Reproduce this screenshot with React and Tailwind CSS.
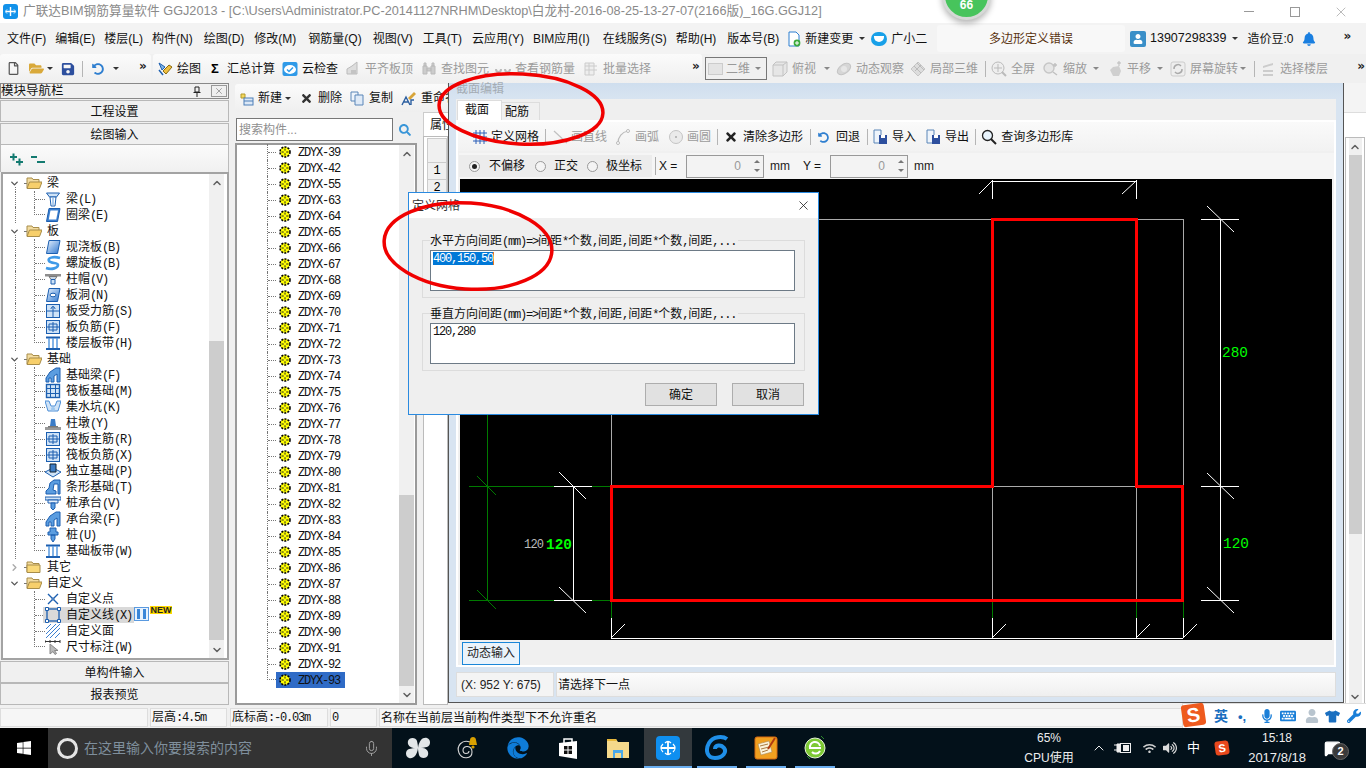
import React from 'react';
import { FaEdge, FaMicrophone, FaKeyboard, FaTshirt, FaWrench, FaUser, FaBell, FaWifi, FaVolumeUp, FaSearch, FaTimes, FaUndoAlt, FaSave, FaFolderOpen, FaRegFile, FaWindows } from 'react-icons/fa';
import { ChevronUp, ChevronDown, ChevronRight, Mic, MessageSquare, X } from 'lucide-react';

function Sim({ t, className = '' }) {
  const parts = t.split(/([\x00-\x7f]+)/).filter(Boolean);
  return (
    <span className={`whitespace-nowrap ${className}`}>
      {parts.map((p, i) =>
        /^[\x00-\x7f]/.test(p) ? (
          <span key={i} className="font-['Liberation_Mono',monospace] tracking-[-1.2px] whitespace-pre">{p}</span>
        ) : (
          <span key={i}>{p}</span>
        )
      )}
    </span>
  );
}

const B = '#1c5fb0';
const L = '#cfe3f7';
const treeIcons = {
  liang: <><path d="M1.5 2h13l-3 4h-7z" fill={L} stroke={B} /><path d="M5 6h6l-1 9H6z" fill="#fff" stroke={B} /><path d="M8 7v7" stroke="#5a9ae0" /></>,
  quan: <><path d="M4 1.5h11l-2.5 13H1.5z" fill="#3b7fd0" stroke={B} /><path d="M5.5 3.5h7.5l-1.8 9H3.8z" fill="#fff" /></>,
  ban: <><path d="M4 1.5h11l-2.5 13H1.5z" fill="url(#gb)" stroke={B} /></>,
  luo: <><path d="M15 3C8 1 2 3 4 6s9 1 9 4-6 5-12 3" fill="none" stroke="#3f9ae8" strokeWidth="2.6" /></>,
  mao: <><path d="M0 3h16v2.5H0z" fill="#8d8d8d" /><path d="M4 5.5h8l-2 3H6z" fill="#c8d6e4" stroke="#777" /><path d="M6 8.5h4V13H6z" fill={L} stroke={B} /></>,
  dong: <><path d="M4 1.5h11l-2.5 13H1.5z" fill="url(#gb)" stroke={B} /><ellipse cx="8" cy="8" rx="3" ry="1.8" fill="#fff" stroke={B} /></>,
  shou: <><rect x="1.5" y="1.5" width="13" height="13" fill={L} stroke={B} /><path d="M1.5 8h13M8 3v11M6 6c0-3 4-3 4 0" fill="none" stroke={B} /></>,
  fu: <><rect x="1.5" y="1.5" width="13" height="13" fill={L} stroke={B} /><path d="M1.5 8h13M8 3v10M4 5h8v6H4z" fill="none" stroke={B} /></>,
  dai: <><path d="M1 2.5h14M1 14h14" stroke={B} strokeWidth="2" /><path d="M4 3v10M8 3v10M12 3v10" stroke="#5a9ae0" strokeWidth="1.5" /></>,
  jl: <><path d="M1 15V11l4-6 6-4h4v14h-3V7l-3 2v6H6V11H4v4z" fill="#5b9de0" stroke={B} /></>,
  fa: <><rect x="1.5" y="1.5" width="13" height="13" fill={L} stroke={B} strokeWidth="1.4" /><path d="M1.5 5.5h13M1.5 10.5h13M5.5 1.5v13M10.5 1.5v13" stroke={B} /></>,
  keng: <><path d="M0 2h4l2 5h4l2-5h4l-3 10H3z" fill={L} stroke="#4c8ed6" /><circle cx="8" cy="10" r="2" fill="#9cc6ee" /></>,
  dun: <><path d="M0 12h16v3H0z" fill="#9a9a9a" /><path d="M3 11h10v1.5H3z" fill="#777" /><path d="M6 4h4l1 7H5z" fill="#3a7cc8" /></>,
  du: <><path d="M0 9l8-4 8 4-8 5z" fill={L} stroke={B} /><path d="M5 1h6v8H5z" fill="#3d7cc4" stroke="#123" /></>,
  tiao: <><path d="M1 15v-3l3-3 1-5 4-3h6v14h-2V5H9l-1 6 3 1v3z" fill="#5b9de0" stroke={B} /></>,
  tai: <><path d="M0 2h16v3H0z" fill={L} stroke={B} /><path d="M3 5h10v3H3z" fill="#e8f1fb" stroke={B} /><path d="M6 8h4v5L8 15l-2-2z" fill="#5b9de0" stroke={B} /></>,
  zhuang: <><path d="M5 1h6v4h2v3H3V5h2zM6 8h4v4l-2 3-2-3z" fill="#5b9de0" stroke={B} /></>,
  dian: <><path d="M3 3l10 10M13 3L3 13" stroke={B} strokeWidth="1.4" /><circle cx="8" cy="8" r="1" fill="#fff" stroke={B} /></>,
  xian: <><rect x="2" y="2" width="12" height="12" fill="none" stroke={B} strokeWidth="1.3" /><path d="M.5.5h3v3h-3zM12.5.5h3v3h-3zM.5 12.5h3v3h-3zM12.5 12.5h3v3h-3z" fill="#fff" stroke={B} /></>,
  mian: <><path d="M1 6l5-5M1 11L11 1M1 15L15 1M5 15L15 5M10 15l5-5" stroke="#3b7fd0" /></>,
  chi: <><path d="M0 1v3M0 2.5h15M15 1v3M5 1v3M10 1v3" stroke="#333" /><path d="M5 5v10l3-2.5 2 3 1.5-1-2-3h3.5z" fill="#b9b9b9" stroke="#888" /></>,
};

function TIcon({ n }) {
  return (
    <svg width="16" height="16" viewBox="0 0 16 16" className="shrink-0">
      <defs>
        <linearGradient id="gb" x1="0" y1="0" x2="1" y2="1"><stop offset="0" stopColor="#e8f2fd" /><stop offset="1" stopColor="#2f78d0" /></linearGradient>
      </defs>
      {treeIcons[n]}
    </svg>
  );
}

function Folder({ open }) {
  return (
    <svg width="16" height="14" viewBox="0 0 16 14" className="shrink-0">
      <path d="M1 2h5l1 1.5h6V12H1z" fill="#f3dca0" stroke="#a88d4a" />
      {open ? <path d="M3.5 6H16l-2.5 6.5H1z" fill="#f7cf6b" stroke="#a88d4a" /> : <path d="M1 5h13v7.5H1z" fill="#f9d879" stroke="#a88d4a" />}
    </svg>
  );
}

function Parent({ t, open = true, guide = false }) {
  return (
    <div className="flex h-4 items-center relative">
      {guide && <div className="absolute left-[15px] top-[12px] h-[5px] border-l border-dotted border-[#777]" />}
      <div className="w-[24px] pl-[9px] shrink-0">
        {open ? <ChevronDown size={11} strokeWidth={3} color="#555" /> : <ChevronRight size={11} strokeWidth={3} color="#aaa" />}
      </div>
      <div className="w-[2px] border-b border-dotted border-[#777]" />
      <Folder open={open} />
      <Sim t={t} className="ml-[5px] text-[12px] text-[#111]" />
    </div>
  );
}

function Child({ n, t, guide = false, last = false, extra = null, sel = false }) {
  return (
    <div className="flex h-4">
      <div className={`ml-[15px] w-[19px] h-full ${guide ? 'border-l border-dotted border-[#777]' : ''}`} />
      {last ? (
        <div className="w-[11px] h-[8px] border-l border-b border-dotted border-[#777]" />
      ) : (
        <div className="w-[11px] h-full border-l border-dotted border-[#777] flex items-center"><div className="w-full border-b border-dotted border-[#777]" /></div>
      )}
      <div className={`flex items-center h-4 ${sel ? 'bg-[#d9d9d9] -ml-[2px] pl-[2px] pr-[2px]' : ''}`}>
        <TIcon n={n} />
        <Sim t={t} className="ml-[5px] text-[12px] text-[#111]" />
      </div>
      {extra}
    </div>
  );
}

function VScroll({ w = 'w-[15px]', space, thumb }) {
  return (
    <div className={`${w} h-full flex flex-col bg-[#f0f0f0] shrink-0`}>
      <div className="h-[17px] flex items-center justify-center shrink-0"><ChevronUp size={12} strokeWidth={3} color="#606060" /></div>
      <div className={`${space} shrink-0`} />
      <div className={`${thumb} bg-[#cdcdcd] shrink-0`} />
      <div className="flex-1" />
      <div className="h-[17px] flex items-center justify-center shrink-0"><ChevronDown size={12} strokeWidth={3} color="#606060" /></div>
    </div>
  );
}

function Caret({ ml = '', c = '#333' }) {
  return <div className={`${ml} shrink-0 w-0 h-0 border-x-[3px] border-x-transparent border-t-[3px]`} style={{ borderTopColor: c }} />;
}

function More() {
  return <span className="text-[12px] font-bold leading-none text-[#222] font-['DejaVu_Sans'] tracking-[-1px]">»</span>;
}

function G({ children, size = 16 }) {
  return <svg width={size} height={size} viewBox="0 0 16 16" className="shrink-0">{children}</svg>;
}

const icoGray = {
  qi: <G><path d="M2 13V8l5-3 5-4v12z" fill="#ddd" stroke="#bbb" /><path d="M6 13V9h5v4z" fill="#c4c4c4" /></G>,
  find: <G><path d="M2 5h4v8H2zM10 5h4v8h-4zM6 7h4v3H6zM3 2h2v3H3zM11 2h2v3h-2z" fill="#ccc" stroke="#bbb" /></G>,
  rebar: <G><path d="M1 8c0 4 5 4 5 0M10 8c0 4 5 4 5 0M8 10h0" fill="none" stroke="#bbb" strokeWidth="2" /></G>,
  batch: <G><path d="M2 2h9v12H2z" fill="#eee" stroke="#ccc" /><path d="M2 5h12M2 9h12M6 2v12" stroke="#ccc" /></G>,
  top: <G><path d="M4 1h11v10l-4 4H1V4z" fill="#e6e6e6" stroke="#c2c2c2" /><path d="M1 4h10v11M11 4l4-3" fill="none" stroke="#c2c2c2" /></G>,
  orbit: <G><ellipse cx="8" cy="8" rx="7.5" ry="4.5" transform="rotate(-35 8 8)" fill="#d6d6d6" stroke="#c4c4c4" /><circle cx="8" cy="8" r="3" fill="#e6e6e6" /></G>,
  d3: <G><path d="M1 8l7-7 7 7-7 7z" fill="#ddd" stroke="#c6c6c6" /><path d="M4 5l7 7M7 2l7 7M5 10l6-6" stroke="#bbb" /></G>,
  full: <G><circle cx="7" cy="7" r="6" fill="#eee" stroke="#bbb" /><path d="M7 3v8M3 7h8" stroke="#bbb" /><path d="M11 11l4 4" stroke="#bbb" strokeWidth="2" /></G>,
  zoom: <G><circle cx="6" cy="7" r="5" fill="#e6e6e6" stroke="#c6c6c6" strokeWidth="1.4" /><path d="M10 11l4 3M12 2v4M10 4h4" stroke="#c0c0c0" strokeWidth="1.4" /></G>,
  pan: <G><path d="M3 9l3-3 6-1 2 5-2 5H6z" fill="#cfcfcf" /><path d="M12 0v5M10 2h4" stroke="#bbb" /></G>,
  rot: <G><rect x="1" y="1" width="14" height="14" rx="2" fill="#eee" stroke="#ccc" /><path d="M4 8a4 4 0 0 1 7-3M12 8a4 4 0 0 1-7 3" fill="none" stroke="#aaa" strokeWidth="1.5" /></G>,
  floor: <G><path d="M3 5l10-3v2L3 7zM3 9h10v2H3zM3 13h10v2H3z" fill="#ccc" /></G>,
  line: <G><path d="M1 2l13 12" stroke="#c0c0c0" strokeWidth="1.2" /></G>,
  arc: <G><path d="M3 14C3 8 7 3 13 2" fill="none" stroke="#bbb" strokeWidth="1.2" /><circle cx="3" cy="14" r="1.5" fill="#fff" stroke="#bbb" /><circle cx="13" cy="2" r="1.5" fill="#fff" stroke="#bbb" /></G>,
  circle: <G><circle cx="8" cy="8" r="6.5" fill="#eaeaea" stroke="#c4c4c4" /><circle cx="8" cy="8" r="1" fill="#aaa" /></G>,
};

function Tool({ ic, t, ml = '', gray = false, gap = 'ml-[4px]' }) {
  return (
    <div className={`flex items-center ${ml} shrink-0`}>
      <div className="w-4 h-4 flex items-center justify-center shrink-0">{ic}</div>
      <span className={`${gap} text-[12px] whitespace-nowrap ${gray ? 'text-[#9b9b9b]' : 'text-[#111]'}`}>{t}</span>
    </div>
  );
}

const Sep = ({ ml = '' }) => <div className={`${ml} w-px h-[16px] bg-[#b5b5b5] shrink-0`} />;

const icoDraw = <G><path d="M2 2l6 4-3 3z" fill="#7fb3e6" stroke="#1c5fb0" /><path d="M6 10l6-6 3 2-6 7z" fill="#f0c040" stroke="#8a6a10" /><path d="M2 9l4 5" stroke="#1c5fb0" strokeWidth="1.5" /></G>;
const icoCloud = <G><rect x="0.5" y="1" width="15" height="14" rx="2" fill="#2f9ae8" /><ellipse cx="8" cy="8.5" rx="6" ry="4.4" fill="#fff" /><path d="M5 8.5l2 2 4-4" fill="none" stroke="#2f9ae8" strokeWidth="1.5" /></G>;

function TitleBar() {
  return (
    <div className="h-[23px] bg-white flex items-center shrink-0">
      <div className="ml-[3px] w-[15px] h-[15px] rounded-[3px] bg-[#1292ea] flex items-center justify-center shrink-0">
        <svg width="11" height="11" viewBox="0 0 11 11"><path d="M5.5 1v9M1 5.5h9" stroke="#fff" strokeWidth="1.4" /><path d="M2 3.5c-2 2-2 2 0 4M9 3.5c2 2 2 2 0 4" fill="none" stroke="#fff" /></svg>
      </div>
      <span className="ml-[5px] text-[12.7px] text-[#8a8a8a] whitespace-nowrap">广联达BIM钢筋算量软件 GGJ2013 - [C:\Users\Administrator.PC-20141127NRHM\Desktop\白龙村-2016-08-25-13-27-07(2166版)_16G.GGJ12]</span>
      <div className="flex-1" />
      <div className="w-[10px] h-px bg-[#999] mr-[36px]" />
      <div className="w-[10px] h-[10px] border border-[#999] mr-[33px]" />
      <X size={16} color="#999" strokeWidth={1} className="mr-[17px]" />
    </div>
  );
}

function MenuBar() {
  const items = [
    ['文件(F)', 'ml-[7px]'], ['编辑(E)', 'ml-[9px]'], ['楼层(L)', 'ml-[9px]'], ['构件(N)', 'ml-[9px]'], ['绘图(D)', 'ml-[11px]'], ['修改(M)', 'ml-[10px]'], ['钢筋量(Q)', 'ml-[12px]'], ['视图(V)', 'ml-[11px]'], ['工具(T)', 'ml-[10px]'], ['云应用(Y)', 'ml-[10px]'], ['BIM应用(I)', 'ml-[9px]'], ['在线服务(S)', 'ml-[13px]'], ['帮助(H)', 'ml-[9px]'], ['版本号(B)', 'ml-[11px]'],
  ];
  return (
    <div className="h-[31px] bg-[#f3f3f3] flex items-center shrink-0">
      <div className="w-[930px] flex items-center shrink-0">
        {items.map(([t, m]) => <span key={t} className={`${m} text-[12px] text-[#111] whitespace-nowrap`}>{t}</span>)}
        <div className="ml-[7px] shrink-0"><G><path d="M3 1h7l3 3v11H3z" fill="#fff" stroke="#2c7fd0" /><circle cx="11" cy="12" r="3.4" fill="#3cab3c" /><path d="M9 12h4M11 10v4" stroke="#fff" /></G></div>
        <span className="ml-[3px] text-[12px] text-[#111] whitespace-nowrap">新建变更</span>
        <Caret ml="ml-[6px]" />
        <div className="ml-[6px] w-[16px] h-[14px] rounded-full bg-[#18a0e8] shrink-0 flex items-center justify-center"><div className="w-[10px] h-[6px] rounded-b-full bg-white" /></div>
        <span className="ml-[4px] text-[12px] text-[#111] whitespace-nowrap">广小二</span>
      </div>
      <div className="ml-[7px] w-[188px] h-[27px] bg-[#f8f8f8] rounded-[3px] flex items-center justify-center text-[12px] text-[#5a3410] shrink-0">多边形定义错误</div>
      <div className="ml-[5px] w-[16px] h-[16px] rounded-[2px] bg-[#3a8fc8] flex items-center justify-center shrink-0"><FaUser size={10} color="#fff" /></div>
      <span className="ml-[4px] text-[12.5px] text-[#111] whitespace-nowrap">13907298339</span>
      <Caret ml="ml-[6px]" />
      <span className="ml-[9px] text-[12px] text-[#111] whitespace-nowrap">造价豆:0</span>
      <FaBell size={14} color="#1a7fe0" className="ml-[8px] shrink-0" />
      <div className="ml-[28px] -mt-[8px]"><More /></div>
    </div>
  );
}

function ToolBar() {
  return (
    <div className="h-[29px] bg-[#f0f0f0] flex items-center shrink-0">
      <div className="w-[151px] h-full flex items-center bg-gradient-to-b from-[#fbfbfb] to-[#efefef] rounded-[3px] shrink-0">
        <FaRegFile size={13} color="#555" className="ml-[7px]" />
        <FaFolderOpen size={15} color="#d9a93a" className="ml-[9px]" />
        <Caret ml="ml-[3px]" />
        <FaSave size={14} color="#2d4f9e" className="ml-[8px]" />
        <Sep ml="ml-[7px]" />
        <FaUndoAlt size={12} color="#2f7fd0" className="ml-[9px]" />
        <Caret ml="ml-[9px]" />
        <div className="ml-[20px] -mt-[8px]"><More /></div>
      </div>
      <div className="ml-[2px] w-[549px] h-full flex items-center bg-gradient-to-b from-[#fbfbfb] to-[#efefef] rounded-[3px] shrink-0 pl-[4px]">
        <Tool ic={icoDraw} t="绘图" />
        <Tool ic={<span className="text-[13px] font-bold text-black">Σ</span>} t="汇总计算" ml="ml-[6px]" />
        <Tool ic={icoCloud} t="云检查" ml="ml-[7px]" />
        <Tool ic={icoGray.qi} t="平齐板顶" ml="ml-[7px]" gray />
        <Tool ic={icoGray.find} t="查找图元" ml="ml-[8px]" gray />
        <Tool ic={icoGray.rebar} t="查看钢筋量" ml="ml-[6px]" gray />
        <Tool ic={icoGray.batch} t="批量选择" ml="ml-[8px]" gray />
        <div className="ml-[41px] -mt-[8px]"><More /></div>
      </div>
      <div className="ml-[3px] w-[62px] h-[23px] border border-[#777] flex items-center shrink-0">
        <div className="ml-[2px] w-[15px] h-[12px] bg-[#e4e4e4] border border-[#ccc]" />
        <span className="ml-[3px] text-[12px] text-[#999]">二维</span>
        <Caret ml="ml-[5px]" c="#888" />
      </div>
      <Tool ic={icoGray.top} t="俯视" ml="ml-[5px]" gray />
      <Caret ml="ml-[8px]" c="#888" />
      <Tool ic={icoGray.orbit} t="动态观察" ml="ml-[6px]" gray />
      <Tool ic={icoGray.d3} t="局部三维" ml="ml-[6px]" gray />
      <Sep ml="ml-[7px]" />
      <Tool ic={icoGray.full} t="全屏" ml="ml-[5px]" gray />
      <Tool ic={icoGray.zoom} t="缩放" ml="ml-[8px]" gray />
      <Caret ml="ml-[6px]" c="#888" />
      <Tool ic={icoGray.pan} t="平移" ml="ml-[8px]" gray />
      <Caret ml="ml-[6px]" c="#888" />
      <Tool ic={icoGray.rot} t="屏幕旋转" ml="ml-[7px]" gray />
      <Caret ml="ml-[2px]" c="#888" />
      <Sep ml="ml-[8px]" />
      <Tool ic={icoGray.floor} t="选择楼层" ml="ml-[5px]" gray />
      <div className="ml-[29px] -mt-[8px]"><More /></div>
    </div>
  );
}

function NavBtn({ t }) {
  return <div className="h-[22px] pt-[1px] border border-[#b8b8b8] bg-[#f0f0f0] flex items-center justify-center text-[12px] text-[#111] shrink-0">{t}</div>;
}

function LeftPanel() {
  return (
    <div className="w-[229px] mr-[6px] flex flex-col shrink-0">
      <div className="h-[16px] border border-[#888] flex items-center shrink-0">
        <span className="text-[12.5px] text-[#111] leading-none">模块导航栏</span>
        <div className="flex-1" />
        <svg width="10" height="11" viewBox="0 0 10 11" className="mr-[9px]"><path d="M3 1h4v5H3zM1.5 6.5h7M5 7v4" fill="none" stroke="#222" /></svg>
        <div className="w-[16px] h-[12px] border border-[#999] flex items-center justify-center mr-px"><X size={10} color="#555" strokeWidth={1.2} /></div>
      </div>
      <div className="mt-px"><NavBtn t="工程设置" /></div>
      <div className="mt-px"><NavBtn t="绘图输入" /></div>
      <div className="h-[27px] bg-gradient-to-b from-[#fbfbfb] to-[#f0f0f0] flex items-center border-x border-[#bbb] shrink-0">
        <svg width="40" height="16" viewBox="0 0 40 16" className="ml-[6px]"><path d="M3 6h7M6.5 2.5v7" stroke="#137a70" strokeWidth="2" /><path d="M9 11h7M12.5 7.5v7" stroke="#137a70" strokeWidth="2" /><path d="M24 6h6" stroke="#137a70" strokeWidth="2" /><path d="M30 11h8" stroke="#137a70" strokeWidth="2" /></svg>
      </div>
      <div className="h-[488px] bg-white border-2 border-[#a3a3a3] flex shrink-0 ml-[1px] w-[228px]">
        <div className="flex-1 pt-[1px] overflow-hidden -ml-[3px]">
          <Parent t="梁" guide />
          <Child n="liang" t="梁(L)" guide />
          <Child n="quan" t="圈梁(E)" guide last />
          <Parent t="板" guide />
          <Child n="ban" t="现浇板(B)" guide />
          <Child n="luo" t="螺旋板(B)" guide />
          <Child n="mao" t="柱帽(V)" guide />
          <Child n="dong" t="板洞(N)" guide />
          <Child n="shou" t="板受力筋(S)" guide />
          <Child n="fu" t="板负筋(F)" guide />
          <Child n="dai" t="楼层板带(H)" guide last />
          <Parent t="基础" guide />
          <Child n="jl" t="基础梁(F)" guide />
          <Child n="fa" t="筏板基础(M)" guide />
          <Child n="keng" t="集水坑(K)" guide />
          <Child n="dun" t="柱墩(Y)" guide />
          <Child n="fu" t="筏板主筋(R)" guide />
          <Child n="fu" t="筏板负筋(X)" guide />
          <Child n="du" t="独立基础(P)" guide />
          <Child n="tiao" t="条形基础(T)" guide />
          <Child n="tai" t="桩承台(V)" guide />
          <Child n="jl" t="承台梁(F)" guide />
          <Child n="zhuang" t="桩(U)" guide />
          <Child n="dai" t="基础板带(W)" guide last />
          <Parent t="其它" open={false} />
          <Parent t="自定义" />
          <Child n="dian" t="自定义点" />
          <Child n="xian" t="自定义线(X)" sel extra={
            <div className="flex items-start">
              <div className="w-[15px] h-[14px] border border-[#5a9ae0] bg-[#e8f2fd] flex justify-around px-px py-px shrink-0">
                <div className="w-[3px] bg-[#3a86d8]" /><div className="w-[3px] bg-[#3a86d8]" />
              </div>
              <span className="ml-[1px] -mt-[1px] h-[8px] w-[22px] bg-[#ffd800] text-[9px] leading-[8px] font-bold text-[#222] font-['Liberation_Sans'] text-center">NEW</span>
            </div>
          } />
          <Child n="mian" t="自定义面" />
          <Child n="chi" t="尺寸标注(W)" last />
        </div>
        <VScroll space="h-[150px]" thumb="h-[299px]" />
        <div className="w-[3px] shrink-0" />
      </div>
      <div className="mt-px"><NavBtn t="单构件输入" /></div>
      <NavBtn t="报表预览" />
    </div>
  );
}

const ids = [39, 42, 55, 63, 64, 65, 66, 67, 68, 69, 70, 71, 72, 73, 74, 75, 76, 77, 78, 79, 80, 81, 82, 83, 84, 85, 86, 87, 88, 89, 90, 91, 92, 93];

function Gear() {
  return (
    <svg width="14" height="14" viewBox="0 0 14 14" className="shrink-0">
      <circle cx="7" cy="7" r="5" fill="#ffff00" stroke="#000" strokeWidth="1.6" strokeDasharray="2 1.2" />
      <path d="M7 3.5v7M3.5 7h7" stroke="#222" strokeWidth="1" />
      <circle cx="7" cy="7" r="1.4" fill="#ffff00" />
    </svg>
  );
}

function MidPanel() {
  return (
    <div className="w-[182px] mr-[3px] flex flex-col shrink-0 relative">
      <div className="w-[213px] h-[28px] flex items-center bg-gradient-to-b from-[#fbfbfb] to-[#efefef] whitespace-nowrap overflow-hidden shrink-0 mt-[1px] rounded-[3px]">
        <Tool ic={<G><path d="M3 4h4v4H3z" fill="#f2d65c" stroke="#b39a2a" /><rect x="6" y="8" width="9" height="7" fill="#dce8f6" stroke="#4d7fb8" /><path d="M6 11h9" stroke="#4d7fb8" /></G>} t="新建" ml="ml-[3px]" />
        <Caret ml="ml-[3px]" />
        <FaTimes size={13} color="#333" className="ml-[9px] shrink-0" />
        <span className="ml-[5px] text-[12px] text-[#111]">删除</span>
        <Tool ic={<G><path d="M2 2h7v9H2z" fill="#eef4fb" stroke="#5a86b8" /><path d="M6 5h8v10H6z" fill="#dfeaf7" stroke="#5a86b8" /></G>} t="复制" ml="ml-[7px]" />
        <Tool ic={<G><path d="M7 8l6-6 2 2-6 6z" fill="#d8a53a" /><path d="M1 15l4-8 4 8M3 12h4M10 15v-5h3" fill="none" stroke="#2c5fa0" strokeWidth="1.4" /></G>} t="重命名" ml="ml-[8px]" />
      </div>
      <div className="h-[31px] pt-[6px] flex items-start shrink-0">
        <div className="ml-[1px] w-[157px] h-[23px] bg-white border border-[#777] flex items-center px-[2px] text-[12px] text-[#8f8f8f] shrink-0">搜索构件...</div>
        <div className="w-[24px] h-[23px] flex items-center justify-center"><FaSearch size={12} color="#3a96d8" /></div>
      </div>
      <div className="flex-1 bg-white border-2 border-[#9a9a9a] flex mb-[3px] min-h-0">
        <div className="flex-1 -mt-[1px] overflow-hidden">
          {ids.map((id, i) => {
            const last = i === ids.length - 1;
            return (
              <div key={id} className="flex h-4">
                <div className="w-[30px] shrink-0" />
                {last ? (
                  <div className="w-[9px] h-[8px] border-l border-b border-dotted border-[#777] shrink-0" />
                ) : (
                  <div className="w-[9px] h-full border-l border-dotted border-[#777] flex items-center shrink-0"><div className="w-full border-b border-dotted border-[#777]" /></div>
                )}
                <div className={`flex items-center h-4 w-[69px] pl-[2px] ${last ? 'bg-[#2f6bc6]' : ''}`}>
                  <Gear />
                  <Sim t={`ZDYX-${id}`} className="ml-[6px] text-[12px] text-[#111]" />
                </div>
              </div>
            );
          })}
        </div>
        <VScroll space="h-[333px]" thumb="h-[191px]" />
        <div className="w-[1px] shrink-0" />
      </div>
    </div>
  );
}

function Canvas() {
  const W = '#ffffff', Gn = '#007a00', Gy = '#aaaaaa';
  const ln = (a, b, c, d, col, k) => <line key={k} x1={a} y1={b} x2={c} y2={d} stroke={col} strokeWidth="1" shapeRendering="crispEdges" />;
  const diag = (a, b, c, d, col, k) => <line key={k} x1={a} y1={b} x2={c} y2={d} stroke={col} strokeWidth="1" />;
  return (
    <div className="w-[872px] h-[461px] bg-black mx-auto shrink-0">
      <svg width="872" height="461" viewBox="460 179 872 461" className="block">
        {[[611, 219, 611, 486], [611, 219, 1183, 219], [1183, 219, 1183, 486], [992, 486, 1136, 486], [992, 486, 992, 600], [1136, 486, 1136, 600], [487, 219, 611, 219]].map((p, i) => ln(p[0] + .5, p[1] + .5, p[2] + .5, p[3] + .5, Gy, 'g' + i))}
        {ln(487.5, 219, 487.5, 600, Gn, 'a1')}
        {ln(469, 486.5, 554, 486.5, Gn, 'a2')}{ln(592, 486.5, 611, 486.5, Gn, 'a3')}
        {ln(469, 600.5, 554, 600.5, Gn, 'a4')}{ln(592, 600.5, 611, 600.5, Gn, 'a5')}
        {diag(477, 476, 496, 495, Gn, 'a6')}{diag(477, 590, 496, 609, Gn, 'a7')}
        {ln(554, 486.5, 592, 486.5, W, 'b1')}{ln(554, 600.5, 592, 600.5, W, 'b2')}{ln(573.5, 486, 573.5, 600, W, 'b3')}
        {diag(559, 472, 586, 499, W, 'b4')}{diag(559, 587, 586, 613, W, 'b5')}
        {[611, 992, 1136, 1183].map((x) => (
          <g key={x}>
            {ln(x + .5, 602, x + .5, 618, Gn, 'c' + x)}
            {ln(x + .5, 618, x + .5, 638, W, 'd' + x)}
            {diag(x, 638, x + 14, 624, W, 'e' + x)}
          </g>
        ))}
        {ln(611, 638.5, 1183, 638.5, W, 'f')}
        {ln(992, 181.5, 1136, 181.5, W, 'h1')}{ln(992.5, 180, 992.5, 199, W, 'h2')}{ln(1136.5, 180, 1136.5, 199, W, 'h3')}
        {diag(979, 194, 992, 181, W, 'h4')}{diag(1122, 194, 1136, 181, W, 'h5')}
        {ln(1220.5, 219, 1220.5, 600, W, 'r0')}
        {[219, 486, 600].map((y) => (
          <g key={y}>
            {ln(1201, y + .5, 1239, y + .5, W, 'r' + y)}
            {diag(1207, y - 13, 1234, y + 13, W, 's' + y)}
          </g>
        ))}
        <path d="M611.5 486.5H992.5V219.5H1136V486.5H1182.5V600.5H611.5Z" fill="none" stroke="#ff0000" strokeWidth="3" shapeRendering="crispEdges" />
        <text x="524" y="548" fontSize="12" fill="#bbb" fontFamily="Liberation Mono" letterSpacing="-0.8">120</text>
        <text x="546" y="549" fontSize="14.4" fontWeight="bold" fill="#00ff00" fontFamily="Liberation Mono">120</text>
        <text x="1222" y="357" fontSize="14.4" fill="#00ff00" fontFamily="Liberation Mono">280</text>
        <text x="1223" y="548" fontSize="14.4" fill="#00ff00" fontFamily="Liberation Mono">120</text>
      </svg>
    </div>
  );
}

function Spin({ w, v }) {
  return (
    <div className={`${w} h-[23px] border border-[#999] flex items-center justify-end bg-[#f3f3f3] text-[12px] text-[#999] shrink-0`}>
      <span className="mr-[10px]">{v}</span>
      <div className="w-[11px] flex flex-col items-center gap-[6px] mr-[1px]"><div className="w-0 h-0 border-x-[3px] border-x-transparent border-b-[3px] border-b-[#777]" /><div className="w-0 h-0 border-x-[3px] border-x-transparent border-t-[3px] border-t-[#777]" /></div>
    </div>
  );
}

const Radio = ({ on }) => (
  <div className="w-[11px] h-[11px] rounded-full border border-[#999] bg-[#f4f4f4] flex items-center justify-center shrink-0">
    {on && <div className="w-[5px] h-[5px] rounded-full bg-[#222]" />}
  </div>
);

const icoIO = <G><path d="M2 1h7v13H2z" fill="#eef4fb" stroke="#5a86b8" /><path d="M7 6h8v9H7z" fill="#2d4f9e" /><path d="M9 6h4v3H9z" fill="#fff" /></G>;

function RightPanel() {
  return (
    <div className="flex-1 flex min-w-0 relative">
      <div className="w-[28px] shrink-0 pt-[29px] flex flex-col pb-[3px] relative">
        <div className="ml-[3px] h-[24px] bg-white border-t border-l border-[#ccc] flex items-center pl-[6px] text-[12px] text-[#111] overflow-hidden whitespace-nowrap shrink-0">属性</div>
        <div className="ml-[3px] flex-1 bg-white border border-[#bbb] pl-[3px] pt-[1px] flex flex-col">
          <div className="h-[25px] bg-[#f0f0f0] border border-[#ccc] shrink-0" />
          <div className="h-[17px] bg-[#f0f0f0] border-x border-b border-[#ccc] flex items-center justify-center text-[12px] font-['Liberation_Mono']">1</div>
          <div className="h-[17px] bg-[#f0f0f0] border-x border-b border-[#ccc] flex items-center justify-center text-[12px] font-['Liberation_Mono']">2</div>
        </div>
      </div>
      <div className="w-[896px] h-[620px] bg-[#d8e4f1] border-l border-b border-[#555] border-r flex flex-col shrink-0">
        <div className="h-[16px] pl-[7px] pb-[5px] flex items-center bg-gradient-to-b from-[#cfdeee] to-[#d8e4f1] text-[12px] text-[#a4acb4] shrink-0">截面编辑</div>
        <div className="ml-[7px] w-[880px] h-[570px] bg-[#efefef] flex flex-col shrink-0">
          <div className="h-[21px] flex items-end pl-[1px] shrink-0">
            <div className="w-[45px] h-[20px] pl-[7px] pb-[1px] bg-white border-t border-x border-[#ddd] flex items-center text-[12px] text-[#111]">截面</div>
            <div className="w-[38px] h-[18px] pl-[3px] bg-[#f0f0f0] border-t border-r border-[#ddd] flex items-center text-[12px] text-[#111]">配筋</div>
          </div>
          <div className="flex-1 bg-[#f0f0f0] border-2 border-white flex flex-col min-h-0">
            <div className="h-[29px] pt-[1px] bg-gradient-to-b from-[#fafafa] to-[#f2f2f2] flex items-center shrink-0 pl-[14px]">
              <Tool ic={<G><path d="M1 4h14M1 8h14M1 12h14M4 1v14M8 1v14M12 1v14" stroke="#2a5fb8" /></G>} t="定义网格" gap="ml-[3px]" />
              <Sep ml="ml-[6px]" />
              <Tool ic={icoGray.line} t="画直线" ml="ml-[7px]" gray gap="ml-[2px]" />
              <Tool ic={icoGray.arc} t="画弧" ml="ml-[8px]" gray />
              <Tool ic={icoGray.circle} t="画圆" ml="ml-[9px]" gray gap="ml-[3px]" />
              <Sep ml="ml-[6px]" />
              <FaTimes size={14} color="#222" className="ml-[6px] shrink-0" />
              <span className="ml-[5px] text-[12px] text-[#111]">清除多边形</span>
              <Sep ml="ml-[7px]" />
              <FaUndoAlt size={11} color="#2f7fd0" className="ml-[7px] shrink-0" />
              <span className="ml-[7px] text-[12px] text-[#111]">回退</span>
              <Sep ml="ml-[7px]" />
              <Tool ic={icoIO} t="导入" ml="ml-[4px]" />
              <Tool ic={icoIO} t="导出" ml="ml-[9px]" />
              <Sep ml="ml-[6px]" />
              <svg width="16" height="16" viewBox="0 0 16 16" className="ml-[5px] shrink-0"><circle cx="6.5" cy="6.5" r="5" fill="#e8f3fc" stroke="#222" strokeWidth="1.3" /><path d="M10 10l5 5" stroke="#222" strokeWidth="2" /></svg>
              <span className="ml-[4px] text-[12px] text-[#111]">查询多边形库</span>
            </div>
            <div className="h-[26px] ml-[1px] bg-[#f5f5f5] flex items-center shrink-0 mt-[2px]">
              <div className="h-[22px] w-[193px] bg-[#ececec] flex items-center pl-[10px] shrink-0">
                <Radio on />
                <span className="ml-[9px] text-[12px] text-[#111]">不偏移</span>
                <div className="ml-[10px]"><Radio /></div>
                <span className="ml-[8px] text-[12px] text-[#111]">正交</span>
                <div className="ml-[9px]"><Radio /></div>
                <span className="ml-[8px] text-[12px] text-[#111]">极坐标</span>
              </div>
              <div className="w-px h-[18px] bg-[#aaa] ml-[3px] shrink-0" />
              <span className="ml-[3px] text-[12px] text-[#111] whitespace-pre w-[27px] shrink-0">X =</span>
              <Spin w="w-[78px]" v="0" />
              <span className="ml-[6px] text-[12px] text-[#222] whitespace-pre w-[33px] shrink-0">mm</span>
              <span className="text-[12px] text-[#111] whitespace-pre w-[27px] shrink-0">Y =</span>
              <Spin w="w-[78px]" v="0" />
              <span className="ml-[6px] text-[12px] text-[#222]">mm</span>
            </div>
            <Canvas />
            <div className="flex-1 flex items-center pl-[4px] pt-[1px]">
              <div className="w-[58px] h-[23px] border border-[#1a86d8] bg-[#eaf3fb] flex items-center justify-center text-[12px] text-[#222]">动态输入</div>
            </div>
          </div>
          <div className="h-[2px] shrink-0 bg-[#d8e4f1]" />
        </div>
        <div className="ml-[7px] mt-[3px] w-[880px] h-[25px] flex shrink-0">
          <div className="w-[98px] h-full bg-[#f4f4f4] border border-[#ddd] flex items-center pl-[4px] text-[12px] text-[#222] font-['Liberation_Sans']">(X: 952 Y: 675)</div>
          <div className="ml-[2px] flex-1 h-full bg-gradient-to-b from-[#fcfcfc] to-[#efefef] border border-[#ddd] flex items-center pl-[1px] text-[12px] text-[#111]">请选择下一点</div>
        </div>
      </div>
      <div className="flex-1 flex flex-col bg-white min-w-0">
        <div className="h-[29px] bg-[#f4f4f4] shrink-0" />
        <div className="h-[25px] bg-white border-t border-[#ddd] shrink-0" />
        <div className="flex-1 min-h-0 flex justify-center border-x border-t border-[#bbb] mx-[1px] mb-[3px] bg-white">
          <VScroll w="w-[13px]" space="h-0" thumb="h-[379px]" />
        </div>
      </div>
    </div>
  );
}

function StatusBar() {
  const cell = 'h-[19px] border border-[#ddd] bg-[#f6f6f6] flex items-center text-[12px] text-[#111] shrink-0';
  return (
    <div className="h-[20px] flex bg-[#f0f0f0] shrink-0 pr-[0px]">
      <div className={`${cell} w-[148px]`} />
      <div className={`${cell} ml-[2px] w-[77px] pl-[1px]`}><Sim t="层高:4.5m" /></div>
      <div className={`${cell} ml-[3px] w-[98px] pl-[1px]`}><Sim t="底标高:-0.03m" /></div>
      <div className={`${cell} ml-[2px] w-[47px] pl-[1px]`}><Sim t="0" /></div>
      <div className={`${cell} ml-[2px] flex-1 pl-[1px] shrink`}>名称在当前层当前构件类型下不允许重名</div>
    </div>
  );
}

function Pin({ children, w = 'w-[48px] ml-[2px]', ul = false, active = false }) {
  return (
    <div className={`${w} h-full flex items-center justify-center shrink-0 relative ${active ? 'bg-[#33393d]' : ''}`}>
      {children}
      {ul && <div className="absolute bottom-0 left-0 right-0 h-[2px] bg-[#6aaef0]" />}
    </div>
  );
}

function Taskbar() {
  return (
    <div className="h-[40px] bg-[#03111a] flex items-center shrink-0 text-white">
      <div className="w-[48px] h-full bg-black flex items-center justify-center shrink-0"><FaWindows size={16} color="#fff" /></div>
      <div className="w-[344px] h-full bg-[#333333] flex items-center shrink-0">
        <div className="ml-[9px] w-[21px] h-[21px] rounded-full border-[3px] border-[#e4e4e4] shrink-0" />
        <span className="ml-[6px] text-[14px] text-[#7f8f9c] whitespace-nowrap">在这里输入你要搜索的内容</span>
        <div className="flex-1" />
        <Mic size={17} color="#a8a8a8" strokeWidth={1.3} className="mr-[12px]" />
      </div>
      <Pin>
        <svg width="24" height="24" viewBox="0 0 24 24"><g fill="#e2e6e8"><path d="M12 12C4 13 1 9 2 5s8-4 9 0c.5 2 1 5 1 7z" /><path d="M12 12C13 4 17 1 21 2s4 8 0 9c-2 .5-5 1-9 1z" /><path d="M12 12c8-1 11 3 10 7s-8 4-9 0c-.5-2-1-5-1-7z" /><path d="M12 12c-1 8-5 11-9 10s-4-8 0-9c2-.5 5-1 9-1z" /></g></svg>
      </Pin>
      <Pin>
        <svg width="28" height="28" viewBox="0 0 28 28"><path d="M16 8C8 5 2 12 5 19s13 6 13-1-9-7-9-2 6 4 6 1" fill="none" stroke="#d8d8d8" strokeWidth="1.1" /><path d="M16 6c0-4 6-4 6 0l1 5h-8z" fill="#d9a000" /><circle cx="19" cy="13" r="1.6" fill="#d9a000" /></svg>
      </Pin>
      <Pin><FaEdge size={22} color="#0f7cd8" /></Pin>
      <Pin>
        <svg width="24" height="24" viewBox="0 0 24 24"><path d="M3 7l18-2v18L3 20z" fill="#fff" /><path d="M8 7V3h8v3" fill="none" stroke="#fff" strokeWidth="1.5" /><path d="M8 10h3.5v3.5H8zM12.5 10H16v3.5h-3.5zM8 14.5h3.5V18H8zM12.5 14.5H16V18h-3.5z" fill="#111" /></svg>
      </Pin>
      <Pin>
        <svg width="24" height="20" viewBox="0 0 24 20"><path d="M1 1h9l2 3h11v16H1z" fill="#f5d98b" /><path d="M1 1h9l1 2H1z" fill="#e8b93c" /><path d="M7 12h10v8H7z" fill="#4aa8e8" /><path d="M9 15h6v5H9z" fill="#f5d98b" /></svg>
      </Pin>
      <Pin active ul>
        <div className="w-[24px] h-[24px] rounded-[4px] bg-[#0f8ff0] flex items-center justify-center">
          <svg width="20" height="20" viewBox="0 0 20 20"><path d="M10 3v14M3 10h14" stroke="#fff" strokeWidth="1.8" /><path d="M5 6c-3 3-3 5 0 8M15 6c3 3 3 5 0 8M7 5c2-2 4-2 6 0M7 15c2 2 4 2 6 0" fill="none" stroke="#fff" strokeWidth="1.2" /></svg>
        </div>
      </Pin>
      <Pin ul w="w-[40px] ml-[5px]">
        <svg width="26" height="26" viewBox="0 0 26 26"><path d="M23 4c-4-3-14-3-18 4s-2 15 6 15 12-6 9-10-9-3-9 1" fill="none" stroke="#1f8fe8" strokeWidth="4" /></svg>
      </Pin>
      <Pin ul w="w-[40px] ml-[9px]">
        <svg width="24" height="24" viewBox="0 0 24 24"><rect x="1" y="1" width="22" height="22" rx="2" fill="#f0a020" stroke="#d86a10" /><path d="M4 8l11-3 3 11-11 3z" fill="#fbf3da" stroke="#a85" strokeWidth=".6" /><path d="M6 10l8-2M7 13l8-2M8 16l6-2" stroke="#a87a40" /><path d="M21 2l-7 11" stroke="#b03a10" strokeWidth="2" /></svg>
      </Pin>
      <Pin ul w="w-[40px] ml-[9px]">
        <svg width="24" height="26" viewBox="0 0 24 26"><circle cx="12" cy="13" r="10" fill="#7dc934" stroke="#e8f5d8" /><path d="M6 13h12M7 13a5 5 0 0 1 10-2M17 16a5 5 0 0 1-8 1" fill="none" stroke="#fff" strokeWidth="2" /><path d="M4 21l3 3M18 1l3 3" stroke="#2a8a2a" /></svg>
      </Pin>
      <div className="flex-1" />
      <div className="w-[60px] flex flex-col items-center text-[12px] leading-[20px] text-[#eee] shrink-0 mr-[12px]">
        <span>65%</span>
        <span className="whitespace-nowrap">CPU使用</span>
      </div>
      <ChevronUp size={16} color="#eee" strokeWidth={1.5} className="mr-[7px] shrink-0" />
      <svg width="18" height="12" viewBox="0 0 18 12" className="mr-[11px] shrink-0"><path d="M0 3h3M0 8h3M3 2h3v8H3z" stroke="#eee" fill="#eee" /><rect x="6.5" y="1.5" width="10" height="9" fill="none" stroke="#eee" /><rect x="9" y="3" width="6" height="6" fill="#eee" /></svg>
      <FaWifi size={13} color="#cfcfcf" className="mr-[7px] shrink-0" />
      <FaVolumeUp size={14} color="#dcdcdc" className="mr-[10px] shrink-0" />
      <span className="text-[13px] text-white mr-[15px] shrink-0">中</span>
      <div className="w-[14px] h-[14px] rounded-[3px] bg-[#e8481c] rotate-[-8deg] flex items-center justify-center text-[11px] font-bold text-white mr-[11px] shrink-0 font-['Liberation_Sans']">S</div>
      <div className="w-[66px] flex flex-col items-end text-[12px] leading-[20px] text-[#eee] shrink-0 mr-[18px]">
        <span className="mr-[14px]">15:18</span>
        <span className="whitespace-nowrap text-[13px]">2017/8/18</span>
      </div>
      <div className="w-[32px] h-full relative flex items-center shrink-0 mr-[10px]">
        <MessageSquare size={17} color="#fff" fill="#fff" />
        <div className="absolute left-[8px] top-[15px] w-[17px] h-[17px] rounded-full bg-[#3a3a3a] border border-[#666] flex items-center justify-center text-[11px] font-bold text-white font-['Liberation_Sans']">2</div>
      </div>
    </div>
  );
}

function Group({ label, value, selected, y }) {
  return (
    <div className={`relative h-[58px] border border-[#dcdcdc] mx-[13px] ${y}`}>
      <div className="absolute left-[7px] -top-[7px] bg-[#efefef] pr-[2px] h-[14px] flex items-center text-[12px] text-[#111]"><Sim t={label} /></div>
      <div className="ml-[7px] mr-[9px] mt-[9px] h-[41px] bg-white border border-[#6d7a86] pl-[2px] text-[12px]">
        {selected ? (
          <div className="mt-[1px] w-fit h-[13px] leading-[13px] bg-[#0078d7] text-white border-r border-[#e87a20]"><Sim t={value} /></div>
        ) : (
          <div className="mt-[1px] w-fit h-[13px] leading-[13px] text-[#111]"><Sim t={value} /></div>
        )}
      </div>
    </div>
  );
}

function Dialog() {
  const btn = 'w-[72px] h-[23px] bg-[#e1e1e1] border border-[#adadad] flex items-center justify-center text-[12px] text-[#111]';
  return (
    <div className="absolute left-[408px] top-[192px] w-[411px] h-[223px] border border-[#2a8ae0] bg-[#efefef] flex flex-col">
      <div className="h-[25px] bg-white flex items-center pl-[3px] text-[12px] text-[#333] shrink-0">
        <span>定义网格</span>
        <div className="flex-1" />
        <X size={15} color="#222" strokeWidth={1.3} className="mr-[7px]" />
      </div>
      <Group y="mt-[22px]" label="水平方向间距(mm)=>间距*个数,间距,间距*个数,间距,..." value="400,150,50" selected />
      <Group y="mt-[15px]" label="垂直方向间距(mm)=>间距*个数,间距,间距*个数,间距,..." value="120,280" />
      <div className="flex justify-end gap-[15px] mt-[12px] mr-[14px]">
        <div className={btn}>确定</div>
        <div className={btn}>取消</div>
      </div>
    </div>
  );
}

function Ime() {
  return (
    <div className="absolute left-[1182px] top-[703px] w-[184px] h-[25px] bg-white border-t border-l border-[#ddd] flex items-center">
      <div className="-ml-[1px] -mt-[2px] w-[23px] h-[22px] rounded-[3px] bg-[#ee5a1e] rotate-[-8deg] flex items-center justify-center text-[20px] font-bold leading-none text-white font-['Liberation_Sans'] shrink-0">S</div>
      <span className="ml-[9px] text-[14px] font-bold text-[#1a6fc0] shrink-0">英</span>
      <span className="ml-[10px] w-[8px] text-[13px] font-bold text-[#1a6fc0] leading-none shrink-0 font-['Liberation_Sans']">•,</span>
      <FaMicrophone size={14} color="#1a7fd8" className="ml-[14px] shrink-0" />
      <FaKeyboard size={16} color="#1a7fd8" className="ml-[6px] shrink-0" />
      <FaUser size={14} color="#b8c4ce" className="ml-[9px] shrink-0" />
      <FaTshirt size={15} color="#1a6fc0" className="ml-[6px] shrink-0" />
      <FaWrench size={14} color="#1a7fd8" className="ml-[7px] shrink-0" />
    </div>
  );
}

export default function App() {
  return (
    <div className="relative w-[1366px] h-[768px] overflow-hidden bg-[#f0f0f0] flex flex-col font-['Liberation_Sans','Noto_Sans_CJK_SC',sans-serif]">
      <TitleBar />
      <MenuBar />
      <ToolBar />
      <div className="h-[625px] flex shrink-0">
        <LeftPanel />
        <MidPanel />
        <RightPanel />
      </div>
      <StatusBar />
      <Taskbar />
      <Dialog />
      <Ime />
      <div className="absolute left-[942px] -top-[29px] w-[49px] h-[49px] rounded-full bg-[#47c45c] border-[3px] border-[#d5d9d6] shadow-[0_3px_6px_rgba(0,0,0,0.3)] flex items-end justify-center pb-[3px] text-[12px] font-bold text-white">66</div>
      <svg width="1366" height="768" className="absolute left-0 top-0 pointer-events-none">
        <ellipse cx="521" cy="109" rx="82" ry="35" transform="rotate(3 521 109)" fill="none" stroke="#f00000" strokeWidth="3.5" />
        <ellipse cx="468" cy="246" rx="84" ry="43" transform="rotate(4 468 246)" fill="none" stroke="#f00000" strokeWidth="3.5" />
      </svg>
    </div>
  );
}
